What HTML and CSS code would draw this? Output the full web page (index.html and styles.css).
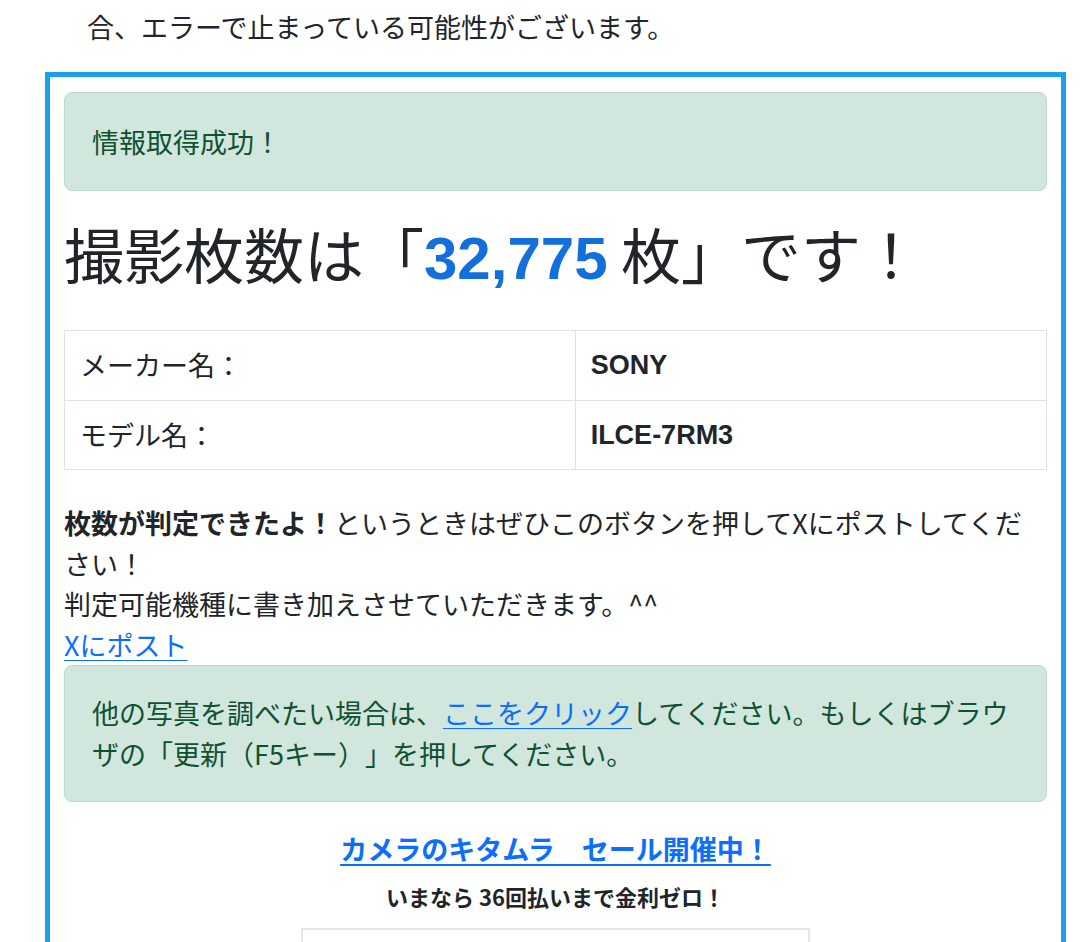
FILE: index.html
```html
<!DOCTYPE html>
<html lang="ja">
<head>
    <meta charset="UTF-8">
    <meta name="viewport" content="width=device-width, initial-scale=1.0">
    <title>撮影枚数チェック</title>
    <link rel="stylesheet" href="styles.css">
</head>
<body>
    <p class="lead-text">合、エラーで止まっている可能性がございます。</p>

    <div class="result-box">
        <div class="alert alert-top">情報取得成功！</div>

        <h1 class="shots">撮影枚数は「<span class="count">32,775</span> 枚」です！</h1>

        <table class="info">
            <tr>
                <td class="label">メーカー名：</td>
                <td class="val">SONY</td>
            </tr>
            <tr>
                <td class="label">モデル名：</td>
                <td class="val">ILCE-7RM3</td>
            </tr>
        </table>

        <p class="post-text"><strong>枚数が判定できたよ！</strong>というときはぜひこのボタンを押してXにポストしてください！<br>判定可能機種に書き加えさせていただきます。^^<br><a href="#">Xにポスト</a></p>

        <div class="alert">他の写真を調べたい場合は、<a href="#">ここをクリック</a>してください。もしくはブラウザの「更新（F5キー）」を押してください。</div>

        <div class="promo">
            <p class="promo-title"><a href="#">カメラのキタムラ　セール開催中！</a></p>
            <p class="promo-sub">いまなら 36回払いまで金利ゼロ！</p>
            <div class="promo-banner"></div>
        </div>
    </div>
</body>
</html>
```

FILE: styles.css
```css
body {
    margin: 0;
    padding: 0;
    font-family: "Noto Sans CJK JP", "Liberation Sans", sans-serif;
    font-size: 27px;
    line-height: 1.5;
    color: #212529;
    background-color: #fff;
    text-spacing-trim: space-all;
}
a {
    color: #0d6efd;
    text-decoration: underline;
    text-decoration-thickness: 1px;
    text-underline-offset: 4px;
}
.lead-text {
    margin: 0;
    padding: 7px 0 0 87px;
}
.result-box {
    margin: 24.5px 14px 0 45px;
    padding: 15px 14px 0;
    border: 5px solid #1ba1ec;
    border-bottom: none;
}
.alert {
    padding: 27px;
    background-color: #d1e7dd;
    border: 1px solid #badbcc;
    border-radius: 8px;
    color: #0f5132;
}
.alert-top {
    padding: 29px 27px 27px;
    margin-bottom: 26px;
}
.shots {
    margin: 0 0 41.5px;
    font-size: 60px;
    font-weight: 400;
    line-height: 1.2;
}
.count {
    font-family: "Liberation Sans", sans-serif;
    color: #136fdb;
    font-weight: 700;
    line-height: 1;
}
.info {
    width: 100%;
    border-collapse: collapse;
    margin-bottom: 33px;
}
.info td {
    padding: 14px 15px;
    border: 1px solid #dee2e6;
}
.info .label {
    width: 52%;
}
.info .val {
    font-family: "Liberation Sans", sans-serif;
    font-weight: 700;
}
.post-text {
    margin: 0;
}
.promo {
    text-align: center;
    padding-top: 27px;
}
.promo-title {
    margin: 0;
    font-weight: 700;
}
.promo-title a {
    text-decoration-thickness: 2px;
}
.promo-sub {
    margin: 10px 0 0;
    font-size: 22px;
    font-weight: 700;
}
.promo-banner {
    width: 505px;
    height: 160px;
    margin: 15.5px auto 0;
    border: 2px solid #e6e6e6;
}
```
